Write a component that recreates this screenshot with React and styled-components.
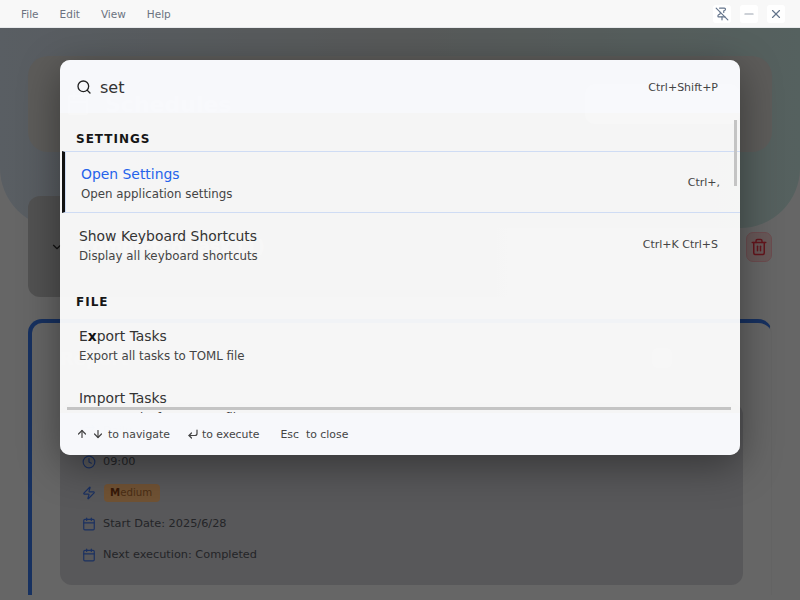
import React from 'react';
import styled, { createGlobalStyle } from 'styled-components';
import { Search, ArrowUp, ArrowDown, CornerDownLeft, PinOff, Minus, X, Trash2, ChevronDown, Clock, Zap, Calendar, Pencil, Plus, Repeat } from 'lucide-react';

const Global = createGlobalStyle`
  html, body { margin: 0; padding: 0; height: 100%; overflow: hidden; }
  body { font-family: "DejaVu Sans", sans-serif; background: #ccc; }
  * { box-sizing: border-box; }
`;
const Shell = styled.div`display: flex; flex-direction: column; height: 600px; width: 800px; overflow: hidden;`;
const TitleBar = styled.header`
  height: 28px; flex: none; background: #f8f8f8; border-bottom: 1px solid #e8eaec;
  display: flex; align-items: center; justify-content: space-between; padding: 0 15px 0 21px;
`;
const Menu = styled.nav`display: flex; gap: 21px; font-size: 10.5px; color: #6b7280;`;
const WinButtons = styled.div`display: flex; gap: 9px;`;
const WinButton = styled.button`
  width: 18px; height: 18px; padding: 0; border: 0; border-radius: 3px; background: #fff;
  display: flex; align-items: center; justify-content: center; color: ${p => p.$color || '#64748b'};
`;
const Main = styled.main`position: relative; flex: 1; overflow: hidden; background: #cdcdcd;`;
const Blob = styled.div`
  position: absolute; top: 0; left: 0; right: 0; height: 200px; border-radius: 0 0 60px 60px;
  background: linear-gradient(90deg, #b2bcc6 0%, #b0b4b4 50%, #aac2be 100%);
`;
const Content = styled.div`position: relative; padding: 28px 28px 0; display: flex; flex-direction: column;`;
const Hero = styled.section`
  height: 96px; border-radius: 20px; background: #bab8b5; display: flex; align-items: center;
  justify-content: space-between; padding: 0 32px 0 38px;
`;
const HeroTitle = styled.h1`margin: 0; display: flex; align-items: center; gap: 15px; font-size: 22px; font-weight: 700; color: #fff;`;
const AddButton = styled.button`
  width: 155px; height: 40px; border: 0; border-radius: 10px; background: #f0f4fa; color: #fff;
  font: 700 14px "DejaVu Sans", sans-serif; display: flex; align-items: center; justify-content: center; gap: 6px;
`;
const GroupRow = styled.section`
  margin-top: 44px; height: 101px; border-radius: 12px;
  background: linear-gradient(90deg, #a4a4a4 0, #a4a4a4 10%, transparent 90%);
  display: flex; align-items: center; justify-content: space-between; padding: 0 0 0 22px;
`;
const GroupTitle = styled.div`display: flex; align-items: center; gap: 16px; font-size: 17px; font-weight: 700; color: #fff;`;
const TrashButton = styled.button`
  width: 26px; height: 30px; padding: 0; border: 1px solid #d8999e; border-radius: 7px; background: #d0b0b0;
  display: flex; align-items: center; justify-content: center; color: #c82a38;
`;
const Card = styled.article`
  margin-top: 22px; height: 276px; background: #cccccc; border-radius: 14px 14px 0 0;
  border-left: 4px solid #2e62c0; border-top: 4px solid #2e62c0; border-right: 1px solid #c6c6c6; display: flex; flex-direction: column;
  padding: 0 28px 10px 28px;
`;
const CardHead = styled.div`
  height: 80px; flex: none; display: flex; align-items: flex-start; justify-content: space-between; padding: 25px 71px 0 0;
`;
const CardTitle = styled.h2`margin: 0; font-size: 18px; font-weight: 700; color: #fff;`;
const EditButton = styled.button`
  width: 20px; height: 20px; padding: 0; border: 0; border-radius: 6px; background: #eaf2ee; color: #fff;
  display: flex; align-items: center; justify-content: center;
`;
const Panel = styled.div`flex: 1; border-radius: 12px; background: #b0b0b4; padding: 12px 22px; display: flex; flex-direction: column;`;
const Meta = styled.div`height: 31px; display: flex; align-items: center; gap: 7px; font-size: 11.3px; color: #484a50;`;
const IconTint = styled.span`display: flex; color: #3560c0;`;
const Badge = styled.span`
  height: 18px; width: 56px; margin-left: 1px; padding: 0 6px; border-radius: 4px; background: #e0a468; color: #965c2a; font-size: 10.2px;
  display: flex; align-items: center; b { color: #6e3410; }
`;
const Overlay = styled.div`
  position: absolute; inset: 0; background: rgba(0,0,0,.5); display: flex; justify-content: center; padding-top: 32px;
`;
const Modal = styled.div`
  position: relative; width: 680px; height: 395px; border-radius: 10px; overflow: hidden; background: rgba(255,255,255,.94);
  box-shadow: 0 10px 40px rgba(0,0,0,.4); display: flex; flex-direction: column;
`;
const SearchBar = styled.div`
  height: 53px; flex: none; display: flex; align-items: center; gap: 8px; padding: 1px 22px 0 16px;
  background: rgba(248,250,255,.6); color: #222;
`;
const SearchText = styled.span`flex: 1; font-size: 16px; color: #333;`;
const Keys = styled.span`font-size: 11px; color: #444; white-space: nowrap;`;
const List = styled.div`flex: 1; overflow: hidden; position: relative; display: flex; flex-direction: column; color: #333;`;
const GroupLabel = styled.div`
  flex: none; height: 38px; display: flex; align-items: flex-end; padding: 0 0 ${p => p.$pb}px 16px;
  font-size: 12px; font-weight: 700; letter-spacing: 1px; color: #161616;
`;
const Item = styled.div`
  flex: none; height: 62px; display: flex; align-items: center; justify-content: space-between;
  padding: 0 22px 0 19px;
`;
const ActiveItem = styled(Item)`
  margin-left: 2px; border-left: 3px solid #111; border-top: 1px solid #cfdcf4; border-bottom: 1px solid #cfdcf4;
  padding: 0 20px 0 16px; box-shadow: inset 1px 0 0 #cfdcf4;
`;
const ItemText = styled.div`display: flex; flex-direction: column; gap: 4px; margin-top: 4px;`;
const ItemTitle = styled.div`font-size: 13.9px; line-height: 17px; color: ${p => p.$active ? '#2563eb' : '#333'}; b { color: #111; }`;
const ItemDesc = styled.div`font-size: 11.84px; line-height: 15px; color: #444;`;
const VScroll = styled.div`position: absolute; top: 7px; right: 3px; width: 3px; height: 66px; background: #c4c4c4;`;
const HScroll = styled.div`position: absolute; left: 7px; right: 9px; bottom: 3px; height: 3px; background: #c4c4c4;`;
const Footer = styled.footer`
  height: 42px; flex: none; display: flex; align-items: center; padding: 0 16px; font-size: 10.88px; color: #444;
  background: rgba(248,250,255,.6);
`;
const Hint = styled.span`display: flex; align-items: center; gap: ${p => p.$gap || 4}px; margin-right: ${p => p.$mr || 0}px;`;

export default function App() {
  return (
    <Shell>
      <Global />
      <TitleBar>
        <Menu><span>File</span><span>Edit</span><span>View</span><span>Help</span></Menu>
        <WinButtons>
          <WinButton><PinOff size={14} /></WinButton>
          <WinButton $color="#9ca3af"><Minus size={14} /></WinButton>
          <WinButton><X size={14} /></WinButton>
        </WinButtons>
      </TitleBar>
      <Main>
        <Blob />
        <Content>
          <Hero>
            <HeroTitle><Calendar size={24} />Schedules</HeroTitle>
            <AddButton><Plus size={14} />Add Schedule</AddButton>
          </Hero>
          <GroupRow>
            <GroupTitle><ChevronDown size={14} color="#222" />Completed Task (1)</GroupTitle>
            <TrashButton><Trash2 size={18} /></TrashButton>
          </GroupRow>
          <Card>
            <CardHead>
              <CardTitle>Report</CardTitle>
              <EditButton><Pencil size={10} /></EditButton>
            </CardHead>
            <Panel>
              <Meta><IconTint><Repeat size={14} /></IconTint>Daily</Meta>
              <Meta><IconTint><Clock size={14} /></IconTint>09:00</Meta>
              <Meta><IconTint><Zap size={14} /></IconTint><Badge><b>M</b>edium</Badge></Meta>
              <Meta><IconTint><Calendar size={14} /></IconTint>Start Date: 2025/6/28</Meta>
              <Meta><IconTint><Calendar size={14} /></IconTint>Next execution: Completed</Meta>
            </Panel>
          </Card>
        </Content>
        <Overlay>
          <Modal>
            <SearchBar>
              <Search size={16} />
              <SearchText>set</SearchText>
              <Keys>Ctrl+Shift+P</Keys>
            </SearchBar>
            <List>
              <GroupLabel $pb={5}>SETTINGS</GroupLabel>
              <ActiveItem>
                <ItemText>
                  <ItemTitle $active>Open Settings</ItemTitle>
                  <ItemDesc>Open application settings</ItemDesc>
                </ItemText>
                <Keys>Ctrl+,</Keys>
              </ActiveItem>
              <Item>
                <ItemText>
                  <ItemTitle>Show Keyboard Shortcuts</ItemTitle>
                  <ItemDesc>Display all keyboard shortcuts</ItemDesc>
                </ItemText>
                <Keys>Ctrl+K Ctrl+S</Keys>
              </Item>
              <GroupLabel $pb={4}>FILE</GroupLabel>
              <Item>
                <ItemText>
                  <ItemTitle>E<b>x</b>port Tasks</ItemTitle>
                  <ItemDesc>Export all tasks to TOML file</ItemDesc>
                </ItemText>
              </Item>
              <Item>
                <ItemText>
                  <ItemTitle>Import Tasks</ItemTitle>
                  <ItemDesc>Import tasks from TOML file</ItemDesc>
                </ItemText>
              </Item>
              <VScroll />
              <HScroll />
            </List>
            <Footer>
              <Hint $mr={17}><ArrowUp size={12} strokeWidth={2.4} /><ArrowDown size={12} strokeWidth={2.4} /><span>to navigate</span></Hint>
              <Hint $mr={21} $gap={3}><CornerDownLeft size={12} strokeWidth={2.4} /><span>to execute</span></Hint>
              <Hint $gap={7}><span>Esc</span><span>to close</span></Hint>
            </Footer>
          </Modal>
        </Overlay>
      </Main>
    </Shell>
  );
}
